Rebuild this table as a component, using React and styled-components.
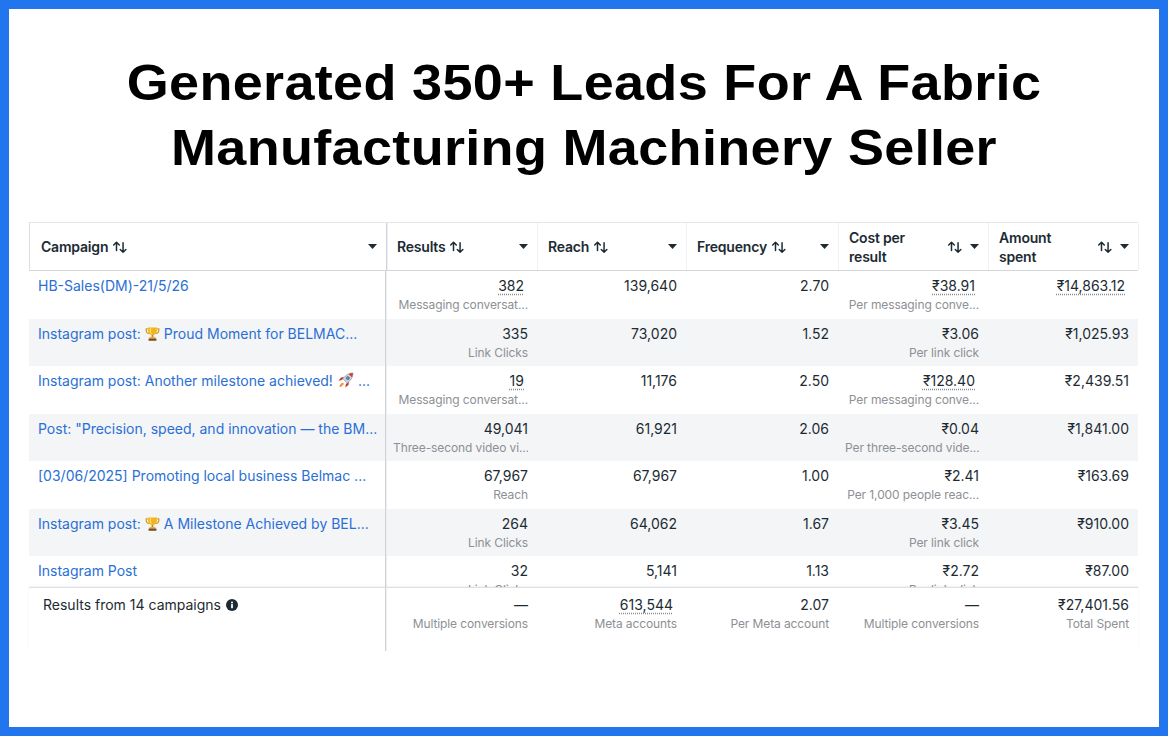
import React from 'react';
import styled, {createGlobalStyle} from 'styled-components';

// CSS starts
const GlobalStyle = createGlobalStyle`
    body {
        margin: 0;
        background: #ffffff;
    }
`;

const Frame = styled.div`
    width: 1168px;
    height: 736px;
    box-sizing: border-box;
    border: 9px solid #2176ef;
    background: #ffffff;
    display: flex;
    flex-direction: column;
    overflow: hidden;
`;

const Title = styled.h1`
    margin: 42px 0 0;
    font-family: "Liberation Sans", Arial, sans-serif;
    font-weight: 700;
    font-size: 50px;
    line-height: 65px;
    letter-spacing: 0.3px;
    color: #000000;
    text-align: center;
    transform: scaleX(1.08);
`;

const Table = styled.div`
    margin: 41px 0 0 20px;
    width: 1109px;
    font-family: Inter, Roboto, "Noto Sans", sans-serif;
    font-size: 14px;
    color: #1c2b33;
`;

const cols = '357px 151px 149px 152px 150px 150px';

const HeaderRow = styled.div`
    display: grid;
    grid-template-columns: ${cols};
    height: 49px;
    box-sizing: border-box;
    border-top: 1px solid #e4e6ea;
    border-left: 1px solid #dadde1;
    border-bottom: 1px solid #d3d6db;
`;

const HeadCell = styled.div`
    display: flex;
    align-items: center;
    gap: 4px;
    padding: 0 9px 0 ${(p) => (p.$first ? '11px' : '10px')};
    font-weight: 600;
    font-size: 14px;
    line-height: 19px;
    letter-spacing: -0.2px;
    border-right: 1px solid ${(p) => (p.$first ? '#d0d3d7' : '#eef0f2')};
    box-shadow: ${(p) => (p.$first ? '1px 0 0 #eceef1' : 'none')};
`;

const HeadLabel = styled.span`
    max-width: ${(p) => (p.$wrap ? '76px' : 'none')};
`;

const HeadTools = styled.span`
    margin-left: auto;
    display: flex;
    align-items: center;
    gap: 7px;
`;

const Body = styled.div`
    height: 316px;
    overflow: hidden;
`;

const Row = styled.div`
    display: grid;
    grid-template-columns: ${cols};
    height: 47.5px;
    background: ${(p) => (p.$alt ? '#f4f5f7' : '#ffffff')};
`;

const NameCell = styled.div`
    padding: 6px 20px 0 9px;
    line-height: 18px;
    color: #2a6fd6;
    white-space: nowrap;
    overflow: hidden;
    border-right: 1px solid #d0d3d7;
    box-shadow: 1px 0 0 #eceef1;
    display: flex;
    align-items: flex-start;
    gap: 4px;
`;

const ValueCell = styled.div`
    padding: 6px 9px 0 7px;
    text-align: right;
    white-space: nowrap;
    overflow: hidden;
`;

const Main = styled.div`
    line-height: 18px;
    color: #1c2b33;
    span {
        text-decoration: ${(p) => (p.$dotted ? 'underline dotted #8a8d91' : 'none')};
        text-underline-offset: 3px;
        margin-right: ${(p) => (p.$dotted ? '4px' : '0')};
    }
`;

const Sub = styled.div`
    margin-top: 2px;
    font-size: 12px;
    line-height: 16px;
    letter-spacing: -0.1px;
    color: #8d9094;
    overflow: hidden;
`;

const Footer = styled.div`
    display: grid;
    grid-template-columns: ${cols};
    height: 63px;
    border-top: 1px solid #dcdfe3;
    box-shadow: 0 -1px 2px rgba(0, 0, 0, 0.06);
    position: relative;
`;

const FootLabel = styled.div`
    padding: 8px 9px 0 14px;
    line-height: 18px;
    display: flex;
    align-items: flex-start;
    gap: 5px;
    border-right: 1px solid #d0d3d7;
    box-shadow: 1px 0 0 #eceef1;
    svg {
        margin-top: 3px;
    }
`;

const FootCell = styled(ValueCell)`
    padding-top: 8px;
`;
// CSS ends

const SortIcon = () => (
    <svg width="16" height="14" viewBox="0 0 18 16" fill="none" stroke="#1c2b33" strokeWidth="1.7" strokeLinecap="round" strokeLinejoin="round">
        <path d="M5 12V2.5M1.8 5.7L5 2.5l3.2 3.2"/>
        <path d="M12.5 3v11M9.3 10.8l3.2 3.2 3.2-3.2"/>
    </svg>
);

const Caret = () => (
    <svg width="9" height="5" viewBox="0 0 9 5">
        <path d="M0 0h9L4.5 5z" fill="#1c2b33"/>
    </svg>
);

const InfoIcon = () => (
    <svg width="12" height="12" viewBox="0 0 12 12">
        <circle cx="6" cy="6" r="6" fill="#1c2b33"/>
        <circle cx="6" cy="3.4" r="1" fill="#fff"/>
        <rect x="5.1" y="5.1" width="1.8" height="4.2" rx="0.6" fill="#fff"/>
    </svg>
);

const Trophy = () => (
    <svg width="15" height="16" viewBox="0 0 16 16" style={{flex: 'none', marginTop: 1}}>
        <path d="M3 2.5H1.3v1.6c0 2 1.4 3.4 3.4 3.6" fill="none" stroke="#d39a1a" strokeWidth="1.3"/>
        <path d="M13 2.5h1.7v1.6c0 2-1.4 3.4-3.4 3.6" fill="none" stroke="#d39a1a" strokeWidth="1.3"/>
        <path d="M3.3 1h9.4v3.2c0 2.8-2 4.8-4.7 4.8S3.3 7 3.3 4.2z" fill="#f2b51c"/>
        <path d="M5.2 1.8h1.2v3.6c0 1.2.5 2 1.2 2.6-1.6-.2-2.4-1.6-2.4-3z" fill="#ffe07a"/>
        <rect x="7" y="9" width="2" height="2.6" fill="#c98b12"/>
        <rect x="4.6" y="11.4" width="6.8" height="1.5" rx="0.4" fill="#e0a418"/>
        <rect x="3.8" y="12.9" width="8.4" height="2.4" rx="0.4" fill="#7a4a1b"/>
    </svg>
);

const Rocket = () => (
    <svg width="17" height="17" viewBox="0 0 16 16" style={{flex: 'none', marginTop: 0}}>
        <path d="M4.6 7.6L1.4 8.2l2.4-3 3-.4z" fill="#c7382a"/>
        <path d="M8.4 11.4l-.6 3.2 3-2.4.4-3z" fill="#c7382a"/>
        <path d="M15 1c-3.6-.1-6.8 1.8-9.4 5.4l4 4c3.6-2.6 5.5-5.8 5.4-9.4z" fill="#cfd6de" stroke="#7d8896" strokeWidth="0.6"/>
        <path d="M15 1c-1.4 0-2.8.4-4 1l3 3c.6-1.2 1-2.6 1-4z" fill="#d8402c"/>
        <circle cx="10.2" cy="5.8" r="1.5" fill="#4f8bd0" stroke="#5d6b7a" strokeWidth="0.6"/>
        <path d="M5.6 10.4c-1.2.2-2.4 1.2-3 3.4 2.2-.6 3.2-1.8 3.4-3z" fill="#f6a623" stroke="#e0641c" strokeWidth="0.5"/>
    </svg>
);

const rows = [
    {name: ['HB-Sales(DM)-21/5/26'], res: ['382', 'Messaging conversat...', true], reach: '139,640', freq: '2.70', cost: ['₹38.91', 'Per messaging conve...', true], spent: ['₹14,863.12', true]},
    {name: ['Instagram post:', <Trophy key="t"/>, 'Proud Moment for BELMAC...'], res: ['335', 'Link Clicks'], reach: '73,020', freq: '1.52', cost: ['₹3.06', 'Per link click'], spent: ['₹1,025.93']},
    {name: ['Instagram post: Another milestone achieved!', <Rocket key="r"/>, '...'], res: ['19', 'Messaging conversat...', true], reach: '11,176', freq: '2.50', cost: ['₹128.40', 'Per messaging conve...', true], spent: ['₹2,439.51']},
    {name: ['Post: "Precision, speed, and innovation — the BM...'], res: ['49,041', 'Three-second video vi...'], reach: '61,921', freq: '2.06', cost: ['₹0.04', 'Per three-second vide...'], spent: ['₹1,841.00']},
    {name: ['[03/06/2025] Promoting local business Belmac ...'], res: ['67,967', 'Reach'], reach: '67,967', freq: '1.00', cost: ['₹2.41', 'Per 1,000 people reac...'], spent: ['₹163.69']},
    {name: ['Instagram post:', <Trophy key="t"/>, 'A Milestone Achieved by BEL...'], res: ['264', 'Link Clicks'], reach: '64,062', freq: '1.67', cost: ['₹3.45', 'Per link click'], spent: ['₹910.00']},
    {name: ['Instagram Post'], res: ['32', 'Link Clicks'], reach: '5,141', freq: '1.13', cost: ['₹2.72', 'Per link click'], spent: ['₹87.00']},
];

const footer = [
    ['—', 'Multiple conversions'],
    ['613,544', 'Meta accounts', true],
    ['2.07', 'Per Meta account'],
    ['—', 'Multiple conversions'],
    ['₹27,401.56', 'Total Spent'],
];

const Value = ({main, sub, dotted}) => (
    <ValueCell>
        <Main $dotted={dotted}><span>{main}</span></Main>
        {sub && <Sub>{sub}</Sub>}
    </ValueCell>
);

const App = () => {
    return (
        <Frame>
            <GlobalStyle/>
            <Title>
                Generated 350+ Leads For A Fabric<br/>Manufacturing Machinery Seller
            </Title>
            <Table>
                <HeaderRow>
                    <HeadCell $first>Campaign <SortIcon/><HeadTools><Caret/></HeadTools></HeadCell>
                    <HeadCell>Results <SortIcon/><HeadTools><Caret/></HeadTools></HeadCell>
                    <HeadCell>Reach <SortIcon/><HeadTools><Caret/></HeadTools></HeadCell>
                    <HeadCell>Frequency <SortIcon/><HeadTools><Caret/></HeadTools></HeadCell>
                    <HeadCell><HeadLabel $wrap>Cost per result</HeadLabel><HeadTools><SortIcon/><Caret/></HeadTools></HeadCell>
                    <HeadCell><HeadLabel $wrap>Amount spent</HeadLabel><HeadTools><SortIcon/><Caret/></HeadTools></HeadCell>
                </HeaderRow>
                <Body>
                    {rows.map((r, i) => (
                        <Row key={i} $alt={i % 2 === 1}>
                            <NameCell>{r.name}</NameCell>
                            <Value main={r.res[0]} sub={r.res[1]} dotted={r.res[2]}/>
                            <Value main={r.reach}/>
                            <Value main={r.freq}/>
                            <Value main={r.cost[0]} sub={r.cost[1]} dotted={r.cost[2]}/>
                            <Value main={r.spent[0]} dotted={r.spent[1]}/>
                        </Row>
                    ))}
                </Body>
                <Footer>
                    <FootLabel>Results from 14 campaigns <InfoIcon/></FootLabel>
                    {footer.map((f, i) => (
                        <FootCell key={i}>
                            <Main $dotted={f[2]}><span>{f[0]}</span></Main>
                            <Sub>{f[1]}</Sub>
                        </FootCell>
                    ))}
                </Footer>
            </Table>
        </Frame>
    );
};

export default App;
